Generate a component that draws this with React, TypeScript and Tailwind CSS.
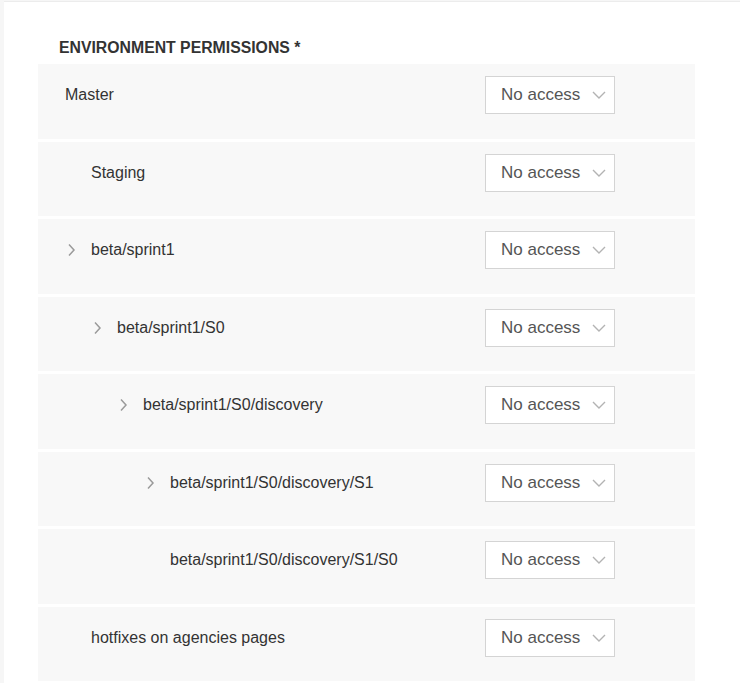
import React from 'react';

type Env = { name: string; level: number; expandable?: boolean };

const envs: Env[] = [
    { name: 'Master', level: 0 },
    { name: 'Staging', level: 1 },
    { name: 'beta/sprint1', level: 1, expandable: true },
    { name: 'beta/sprint1/S0', level: 2, expandable: true },
    { name: 'beta/sprint1/S0/discovery', level: 3, expandable: true },
    { name: 'beta/sprint1/S0/discovery/S1', level: 4, expandable: true },
    { name: 'beta/sprint1/S0/discovery/S1/S0', level: 4 },
    { name: 'hotfixes on agencies pages', level: 1 },
];

const indents = ['pl-[27px]', 'pl-[53px]', 'pl-[79px]', 'pl-[105px]', 'pl-[132px]'];

const ChevronRight = () => (
    <svg width="9" height="14" viewBox="0 0 9 14" className="absolute left-[-24px] top-[2px]">
        <path d="M2 1.5 L7 7 L2 12.5" fill="none" stroke="#9a9a9a" strokeWidth="1.5" />
    </svg>
);

const AccessSelect = () => (
    <div className="flex items-center justify-between w-[130px] h-[38px] bg-white border border-[#d4d4d4] pl-[15px] pr-[8px]">
        <span className="text-[17px] text-[#555]">No access</span>
        <svg width="14" height="8" viewBox="0 0 14 8">
            <path d="M1 1 L7 7 L13 1" fill="none" stroke="#b3b3b3" strokeWidth="1.4" />
        </svg>
    </div>
);

const EnvRow = ({ env }: { env: Env }) => (
    <div className="flex items-center justify-between bg-[#f8f8f8] h-[74.5px] pt-[12px] pb-[24.5px] pr-[80px]">
        <div className={`relative ${indents[env.level]} text-[16px] text-[#333]`}>
            <span className="relative">
                {env.expandable && <ChevronRight />}
                {env.name}
            </span>
        </div>
        <AccessSelect />
    </div>
);

export default function App() {
    return (
        <div className="w-[740px] h-[683px] overflow-hidden bg-[#f6f6f6] pl-[4px] pt-[1px]" style={{ fontFamily: '"Liberation Sans", Arial, sans-serif' }}>
            <div className="bg-white border-t border-[#ececec] h-full">
                <h2 className="pl-[55px] pt-[37px] text-[15.8px] font-bold text-[#333] leading-[18px]">
                    ENVIRONMENT PERMISSIONS *
                </h2>
                <div className="mt-[7px] ml-[34px] w-[657px] flex flex-col gap-[3px]">
                    {envs.map((env) => (
                        <EnvRow key={env.name} env={env} />
                    ))}
                </div>
            </div>
        </div>
    );
}
